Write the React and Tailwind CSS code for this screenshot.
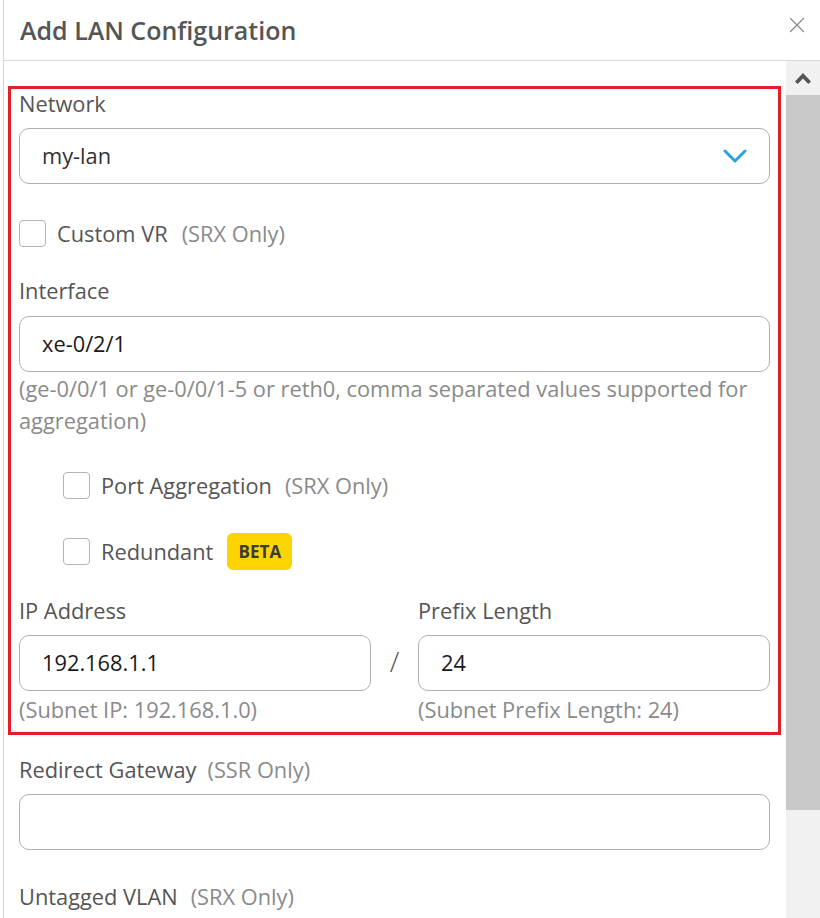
import { X } from "lucide-react";

function Checkbox() {
  return <span className="block h-[27px] w-[27px] shrink-0 rounded-[4px] border border-[#b3b3b3] bg-white" />;
}

function TextInput({ value, className = "" }) {
  return (
    <div className={`flex h-14 items-center rounded-[10px] border border-[#b0b0b0] bg-white px-[22px] text-[#1a1a1a] ${className}`}>
      {value}
    </div>
  );
}

export default function App() {
  return (
    <div className="flex h-[918px] w-[820px] overflow-hidden bg-white font-['Open_Sans',sans-serif] text-[21.8px] text-[#555]">
      <div className="w-[3px] shrink-0 bg-white" />
      <div className="flex min-w-0 flex-1 flex-col border-l border-[#d6d6d6]">
        <header className="flex h-[61px] shrink-0 items-center justify-between border-b border-[#d9d9d9] pl-4 pr-[10px]">
          <h1 className="text-[25px] font-semibold leading-none text-[#555]">Add LAN Configuration</h1>
          <X size={26} strokeWidth={1.1} className="mb-[10px] text-[#888]" />
        </header>

        <div className="flex min-h-0 flex-1">
          <div className="min-w-0 flex-1">
            <section className="ml-1 mr-[5px] mt-[25px] border-[3px] border-[#e41e26] px-2 pb-[6px] leading-8">
              <div className="-mt-px h-8">Network</div>
              <div className="mt-2 flex h-14 items-center justify-between rounded-[10px] border border-[#b0b0b0] bg-white pl-[22px] pr-[22px]">
                <span className="text-[#333]">my-lan</span>
                <svg width="24" height="16" viewBox="0 0 24 16" fill="none">
                  <path d="M2 3l10 10L22 3" stroke="#29a3dd" strokeWidth="3" strokeLinecap="round" strokeLinejoin="round" />
                </svg>
              </div>

              <label className="mt-9 flex h-[27px] items-center">
                <Checkbox />
                <span className="ml-[11px]">Custom VR</span>
                <span className="ml-[14px] text-[#8a8a8a]">(SRX Only)</span>
              </label>

              <div className="mt-[28px] h-8">Interface</div>
              <TextInput value="xe-0/2/1" className="mt-[9px]" />
              <p className="mt-px text-[#8a8a8a]">
                (ge-0/0/1 or ge-0/0/1-5 or reth0, comma separated values supported for aggregation)
              </p>

              <label className="ml-11 mt-[35px] flex h-[27px] items-center">
                <Checkbox />
                <span className="ml-[11px]">Port Aggregation</span>
                <span className="ml-[13px] text-[#8a8a8a]">(SRX Only)</span>
              </label>

              <label className="ml-11 mt-[39px] flex h-[27px] items-center">
                <Checkbox />
                <span className="ml-[11px]">Redundant</span>
                <span className="ml-[14px] flex h-[37px] w-[65px] items-center justify-center rounded-[6px] bg-[#fdd400] text-[17px] font-bold text-[#3a3a3a]">
                  BETA
                </span>
              </label>

              <div className="mt-[30px] flex items-start">
                <div className="flex-1">
                  <div className="h-8">IP Address</div>
                  <TextInput value="192.168.1.1" className="mt-2" />
                  <div className="mt-[3px] text-[#8a8a8a]">(Subnet IP: 192.168.1.0)</div>
                </div>
                <div className="flex w-[47px] shrink-0 justify-center pt-[50px] text-[28px] font-light text-[#555]">/</div>
                <div className="flex-1">
                  <div className="h-8">Prefix Length</div>
                  <TextInput value="24" className="mt-2" />
                  <div className="mt-[3px] text-[#8a8a8a]">(Subnet Prefix Length: 24)</div>
                </div>
              </div>
            </section>

            <div className="pl-[15px] pr-4 leading-8">
              <div className="mt-[19px] h-8">
                Redirect Gateway<span className="ml-[11px] text-[#8a8a8a]">(SSR Only)</span>
              </div>
              <TextInput value="" className="mt-2" />
              <div className="mt-[31px] h-8">
                Untagged VLAN<span className="ml-[13px] text-[#8a8a8a]">(SRX Only)</span>
              </div>
            </div>
          </div>

          <div className="flex w-[34px] shrink-0 flex-col bg-[#f1f1f1]">
            <div className="flex h-[34px] items-center justify-center">
              <svg width="18" height="13" viewBox="0 0 18 13">
                <path d="M9 1L17 9.5 14.3 12 9 6.6 3.7 12 1 9.5Z" fill="#555" />
              </svg>
            </div>
            <div className="h-[715px] bg-[#c9c9c9]" />
          </div>
        </div>
      </div>
    </div>
  );
}
